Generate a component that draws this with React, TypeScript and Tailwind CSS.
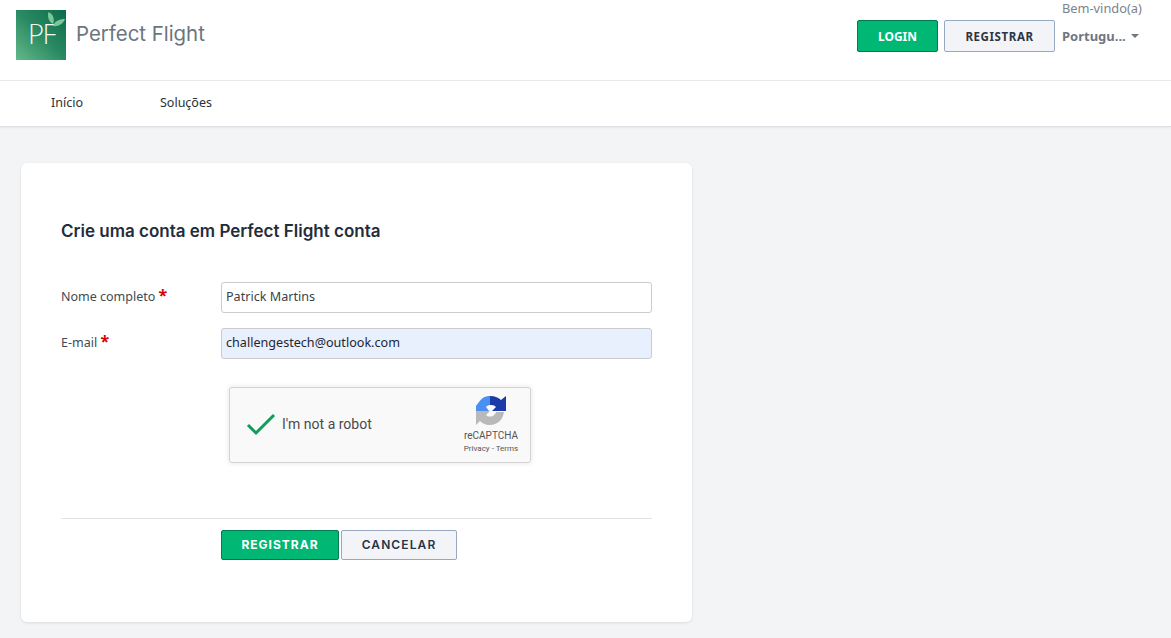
import React from "react";

const sans = "font-['Noto_Sans',sans-serif]";
const display = "font-['Inter',sans-serif]";

const Logo = () => (
  <div className="relative w-[50px] h-[50px] bg-gradient-to-tr from-[#62b98a] via-[#2a8a63] to-[#0b6b4b] overflow-hidden">
    <span className="absolute left-[12px] top-[8px] font-['Lato',sans-serif] font-light text-[27px] leading-[32px] tracking-[-1px] text-[#f2f8f3]">
      PF
    </span>
    <svg className="absolute left-[30px] top-[1px]" width="20" height="18" viewBox="0 0 20 18">
      <path d="M2.5 1 C7 3 9 8 7 13 C3 11 1 6 2.5 1Z" fill="#7cc79a" />
      <path d="M19 8 C17 13 12 16 7 15 C9 10 13 8 19 8Z" fill="#7cc79a" />
    </svg>
  </div>
);

const Recaptcha = () => (
  <div className="w-[302px] h-[76px] ml-[8px] bg-[#f9f9f9] border border-[#d3d3d3] rounded-[3px] shadow-[0_0_4px_1px_rgba(0,0,0,0.08)] flex items-center font-['Roboto',sans-serif]">
    <svg className="ml-[16px] mb-[2px] shrink-0" width="30" height="24" viewBox="0 0 30 24" fill="none">
      <path d="M2 13 L10 21 L28 3" stroke="#0f9d58" strokeWidth="3" />
    </svg>
    <span className="ml-[6px] mb-[2px] text-[14px] text-[#4a4a4a] flex-1">I'm not a robot</span>
    <div className="w-[70px] mr-[4px] flex flex-col items-center">
      <svg width="32" height="32" viewBox="0 0 32 32">
        <path d="M1 16 L1 11 L4 7 C7 3 10 1 15 1 L15 10 C13 10 12 11 11 12 L14 16 Z" fill="#4a90f0" />
        <path d="M15 1 C20 1 24 3 26 5 L31 1 L31 16 L17 16 L21 12 C19 10 17 10 15 10 Z" fill="#1c3aa9" />
        <path d="M1 16 L15 16 L11 20 C13 22 17 22 19 20 C20 19 21 18 21 17 L29 17 C28 25 22 30 15 30 C10 30 7 28 5 26 L1 30 Z" fill="#b9b9b9" />
      </svg>
      <span className="text-[10px] leading-[12px] mt-[3px] text-[#555]">reCAPTCHA</span>
      <span className="text-[8px] leading-[12px] mt-[1px] text-[#555]">Privacy - Terms</span>
    </div>
  </div>
);

const App = () => {
  return (
    <div className={`w-[1171px] h-[638px] overflow-hidden bg-[#f3f4f6] ${sans}`}>
      {/* top */}
      <div className="h-[81px] bg-white border-b border-[#e9ebef] flex justify-between pl-[16px]">
        <div className="flex items-start pt-[10px]">
          <Logo />
          <span className={`ml-[10px] mt-[9px] text-[20.4px] leading-[30px] text-[#6c757d] ${display}`}>Perfect Flight</span>
        </div>
        <div className="flex items-start">
          <button className="mt-[20px] w-[81px] h-[32px] pt-[1px] bg-[#00b873] border border-[#047a50] rounded-[2px] text-white text-[12px] font-bold">
            LOGIN
          </button>
          <button className="mt-[20px] ml-[6px] w-[111px] h-[32px] pt-[1px] bg-[#f3f4f7] border border-[#98a8c0] rounded-[2px] text-[#2c3444] text-[11.5px] font-bold tracking-[0.6px]">
            REGISTRAR
          </button>
          <div className="ml-[7px] w-[109px] flex flex-col">
            <span className="text-[12.8px] leading-[18px] -mt-[1px] text-[#7b838b] whitespace-nowrap">Bem-vindo(a)</span>
            <div className="mt-[10px] flex items-center">
              <span className="text-[13px] leading-[18px] font-bold text-[#6f7780] whitespace-nowrap">Portugu...</span>
              <span className="ml-[5px] w-0 h-0 border-x-[4px] border-x-transparent border-t-[4px] border-t-[#6f7780]" />
            </div>
          </div>
        </div>
      </div>
      {/* nav */}
      <div className="h-[46px] bg-white border-b border-[#dcdfe4] shadow-[0_1px_2px_rgba(0,0,0,0.06)] flex items-center pl-[51px] gap-[77px] text-[12.5px] text-[#2b2f36]">
        <span>Início</span>
        <span>Soluções</span>
      </div>
      {/* card */}
      <div className="mt-[36px] ml-[21px] w-[671px] h-[459px] bg-white rounded-[6px] shadow-[0_1px_3px_rgba(0,0,0,0.1)] pt-[57px] px-[40px]">
        <h1 className={`text-[17px] leading-[22px] font-semibold text-[#1f2d3d] ${display}`}>Crie uma conta em Perfect Flight conta</h1>
        <div className="mt-[40px] flex flex-col gap-[15px]">
          <div className="flex">
            <label className="w-[160px] pt-[3px] text-[12.5px] leading-[20px] text-[#3e4a56]">
              Nome completo <span className="text-[#d90000] font-bold text-[16px]">*</span>
            </label>
            <input
              readOnly
              value="Patrick Martins"
              className="w-[431px] h-[31px] pl-[4px] pb-[2px] border border-[#c9cbce] rounded-[3px] bg-white text-[12.6px] text-[#37424e] outline-none"
            />
          </div>
          <div className="flex">
            <label className="w-[160px] pt-[3px] text-[12.5px] leading-[20px] text-[#3e4a56]">
              E-mail <span className="text-[#d90000] font-bold text-[16px]">*</span>
            </label>
            <input
              readOnly
              value="challengestech@outlook.com"
              className="w-[431px] h-[31px] pl-[4px] pb-[2px] border border-[#c9cbce] rounded-[3px] bg-[#e8f0fe] text-[12.6px] text-[#1d2530] outline-none"
            />
          </div>
        </div>
        <div className="mt-[28px] pl-[160px]">
          <Recaptcha />
        </div>
        <div className="mt-[55px] border-t border-[#e3e3e3] pt-[11px] pl-[160px] flex gap-[2px]">
          <button className={`w-[118px] h-[30px] bg-[#00b873] border border-[#047a50] rounded-[2px] text-white text-[12px] font-bold tracking-[1px] ${display}`}>
            REGISTRAR
          </button>
          <button className={`w-[116px] h-[30px] bg-[#f3f4f7] border border-[#98a8c0] rounded-[2px] text-[#253548] text-[12px] font-semibold tracking-[1.1px] ${display}`}>
            CANCELAR
          </button>
        </div>
      </div>
    </div>
  );
};

export default App;
